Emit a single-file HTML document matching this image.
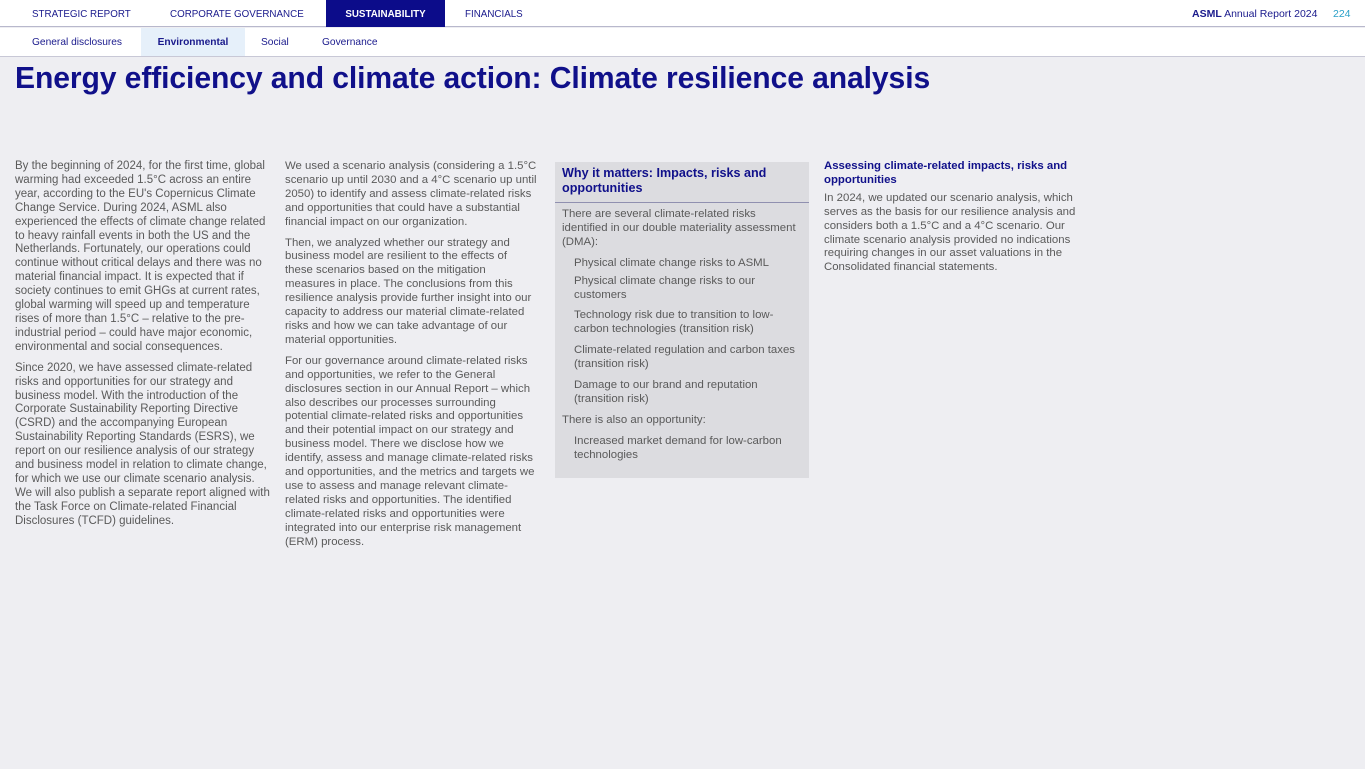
<!DOCTYPE html>
<html><head><meta charset="utf-8"><style>
*{margin:0;padding:0;box-sizing:border-box}
body{width:1365px;height:769px;background:#eeeef2;font-family:"Liberation Sans",Arial,sans-serif;position:relative;overflow:hidden;color:#5a5a5a}
.top{position:absolute;left:0;top:0;width:1365px;height:27px;background:#fff;border-bottom:1px solid #b8b8cc}
.top span{position:absolute;top:0;height:27px;line-height:29px;font-size:9.8px;color:#1a1a8c}
.sub{position:absolute;left:0;top:28px;width:1365px;height:29px;background:#fff;border-bottom:1px solid #c8c8d6}
.sub span{position:absolute;top:0;height:28px;line-height:30px;font-size:10.2px;color:#1a1a8c}
h1{position:absolute;left:15px;top:62px;font-size:30.1px;font-weight:bold;color:#10108a;white-space:nowrap;letter-spacing:-0.1px}
.t{position:absolute;font-size:11.4px;line-height:13.9px;white-space:nowrap;color:#5a5a5a}
.t p{margin-bottom:7px}
.box{position:absolute;left:555px;top:162px;width:254px;height:316px;background:#dcdce0}
.bh{position:absolute;left:7px;top:4px;font-size:12.6px;line-height:15px;font-weight:bold;color:#10108a;white-space:nowrap}
.bl{position:absolute;left:0;top:40px;width:254px;height:1px;background:#9090b0}
</style></head><body>
<div class="top">
<span style="left:32px">STRATEGIC REPORT</span>
<span style="left:170px">CORPORATE GOVERNANCE</span>
<span style="left:326px;width:119px;background:#0c0c8a;color:#fff;font-weight:bold;text-align:center">SUSTAINABILITY</span>
<span style="left:465px">FINANCIALS</span>
<span style="left:1192px;font-size:10.5px"><b>ASML</b> Annual Report 2024</span>
<span style="left:1333px;color:#2aa0c8;font-size:10.5px">224</span>
</div>
<div class="sub">
<span style="left:32px">General disclosures</span>
<span style="left:141px;width:104px;background:#e6f0fa;font-weight:bold;text-align:center">Environmental</span>
<span style="left:261px">Social</span>
<span style="left:322px">Governance</span>
</div>
<h1>Energy efficiency and climate action: Climate resilience analysis</h1>

<div class="t" style="left:15px;top:160px;font-size:11.5px">
<p>By the beginning of 2024, for the first time, global<br>warming had exceeded 1.5°C across an entire<br>year, according to the EU's Copernicus Climate<br>Change Service. During 2024, ASML also<br>experienced the effects of climate change related<br>to heavy rainfall events in both the US and the<br>Netherlands. Fortunately, our operations could<br>continue without critical delays and there was no<br>material financial impact. It is expected that if<br>society continues to emit GHGs at current rates,<br>global warming will speed up and temperature<br>rises of more than 1.5°C – relative to the pre-<br>industrial period – could have major economic,<br>environmental and social consequences.</p>
<p>Since 2020, we have assessed climate-related<br>risks and opportunities for our strategy and<br>business model. With the introduction of the<br>Corporate Sustainability Reporting Directive<br>(CSRD) and the accompanying European<br>Sustainability Reporting Standards (ESRS), we<br>report on our resilience analysis of our strategy<br>and business model in relation to climate change,<br>for which we use our climate scenario analysis.<br>We will also publish a separate report aligned with<br>the Task Force on Climate-related Financial<br>Disclosures (TCFD) guidelines.</p>
</div>

<div class="t" style="left:285px;top:160px">
<p>We used a scenario analysis (considering a 1.5°C<br>scenario up until 2030 and a 4°C scenario up until<br>2050) to identify and assess climate-related risks<br>and opportunities that could have a substantial<br>financial impact on our organization.</p>
<p>Then, we analyzed whether our strategy and<br>business model are resilient to the effects of<br>these scenarios based on the mitigation<br>measures in place. The conclusions from this<br>resilience analysis provide further insight into our<br>capacity to address our material climate-related<br>risks and how we can take advantage of our<br>material opportunities.</p>
<p>For our governance around climate-related risks<br>and opportunities, we refer to the General<br>disclosures section in our Annual Report – which<br>also describes our processes surrounding<br>potential climate-related risks and opportunities<br>and their potential impact on our strategy and<br>business model. There we disclose how we<br>identify, assess and manage climate-related risks<br>and opportunities, and the metrics and targets we<br>use to assess and manage relevant climate-<br>related risks and opportunities. The identified<br>climate-related risks and opportunities were<br>integrated into our enterprise risk management<br>(ERM) process.</p>
</div>

<div class="box">
<div class="bh">Why it matters: Impacts, risks and<br>opportunities</div>
<div class="bl"></div>
<div class="t" style="left:7px;top:46px">
<p>There are several climate-related risks<br>identified in our double materiality assessment<br>(DMA):</p>
<div style="padding-left:12px">
<p style="margin-bottom:4px">Physical climate change risks to ASML</p>
<p>Physical climate change risks to our<br>customers</p>
<p>Technology risk due to transition to low-<br>carbon technologies (transition risk)</p>
<p>Climate-related regulation and carbon taxes<br>(transition risk)</p>
<p>Damage to our brand and reputation<br>(transition risk)</p>
</div>
<p>There is also an opportunity:</p>
<p style="padding-left:12px">Increased market demand for low-carbon<br>technologies</p>
</div>
</div>

<div class="t" style="left:824px;top:160px">
<div style="font-weight:bold;color:#10108a;margin-bottom:4px">Assessing climate-related impacts, risks and<br>opportunities</div>
<p>In 2024, we updated our scenario analysis, which<br>serves as the basis for our resilience analysis and<br>considers both a 1.5°C and a 4°C scenario. Our<br>climate scenario analysis provided no indications<br>requiring changes in our asset valuations in the<br>Consolidated financial statements.</p>
</div>
</body></html>
